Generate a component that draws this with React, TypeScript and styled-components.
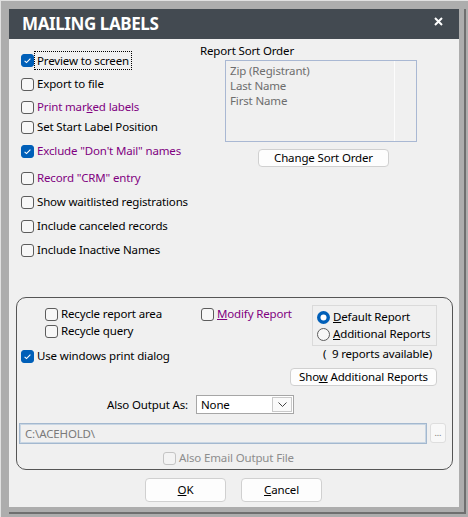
import React from "react";
import styled, { createGlobalStyle } from "styled-components";

const GlobalStyle = createGlobalStyle`
  html, body { margin: 0; padding: 0; background: #adadad; }
  body {
    font-family: "Noto Sans", "Open Sans", sans-serif;
    font-size: 11.5px;
    letter-spacing: -0.15px;
    color: #000;
  }
  * { box-sizing: border-box; }
`;

const Frame = styled.div`
  width: 468px;
  height: 517px;
  display: flex;
  background: #adadad;
  border-top: 1px solid #e1e1e1;
  border-left: 1px solid #e1e1e1;
  padding: 8px 2px 3px 8px;
`;

const Bevel = styled.div`
  flex: 1;
  display: flex;
  border-right: 2px solid #6f6f6f;
  border-bottom: 2px solid #6f6f6f;
  padding: 0 5px 5px 0;
`;

const Window = styled.div`
  flex: 1;
  display: flex;
  flex-direction: column;
  background: #f0f0f0;
`;

const TitleBar = styled.div`
  height: 30px;
  flex: none;
  display: flex;
  align-items: center;
  justify-content: space-between;
  background: #434a51;
  padding: 0 16px 0 13px;
`;

const Title = styled.div`
  color: #fff;
  font-weight: 700;
  font-size: 17px;
  letter-spacing: -0.4px;
  line-height: 30px;
`;

const CloseIcon = styled.svg`
  width: 9px;
  height: 9px;
  margin-top: -5px;
`;

const Body = styled.div`
  flex: 1;
  display: flex;
  flex-direction: column;
`;

const TopSection = styled.div`
  height: 258px;
  flex: none;
  display: flex;
`;

const OptionColumn = styled.div`
  width: 191px;
  padding: 12px 0 0 12px;
  display: flex;
  flex-direction: column;
`;

const Row = styled.div<{ $gap?: number; $indent?: number; $h?: number }>`
  display: flex;
  align-items: center;
  gap: 3px;
  height: ${(p) => p.$h ?? 18}px;
  margin-top: ${(p) => p.$gap ?? 0}px;
  margin-left: ${(p) => p.$indent ?? 0}px;
  white-space: nowrap;
`;

const Label = styled.span<{ $tone?: "normal" | "purple" | "disabled" }>`
  color: ${(p) =>
    p.$tone === "purple" ? "#800080" : p.$tone === "disabled" ? "#8d8d8d" : "#000"};
  line-height: 16px;
`;

const Focused = styled.span`
  outline: 1px dotted #000;
  outline-offset: 0;
  padding: 1px 2px 0 2px;
  margin-left: -2px;
  line-height: 16px;
`;

const Box = styled.span<{ $checked?: boolean; $disabled?: boolean }>`
  width: 13px;
  height: 13px;
  flex: none;
  border-radius: 3px;
  display: inline-flex;
  align-items: center;
  justify-content: center;
  background: ${(p) => (p.$checked ? "#005fb8" : p.$disabled ? "#f3f3f3" : "#f7f7f7")};
  border: 1px solid
    ${(p) => (p.$checked ? "#005fb8" : p.$disabled ? "#c4c4c4" : "#5c5c5c")};
`;

const CheckBox: React.FC<{ checked?: boolean; disabled?: boolean }> = ({
  checked,
  disabled,
}) => (
  <Box $checked={checked} $disabled={disabled}>
    {checked && (
      <svg width="11" height="11" viewBox="0 0 11 11">
        <path d="M2.6 5.8 L4.5 7.6 L8.4 3.6" fill="none" stroke="#fff" strokeWidth="1.1" />
      </svg>
    )}
  </Box>
);

const Radio: React.FC<{ selected?: boolean }> = ({ selected }) => (
  <svg width="13" height="13" viewBox="0 0 13 13" style={{ flex: "none" }}>
    {selected ? (
      <>
        <circle cx="6.5" cy="6.5" r="6.5" fill="#005fb8" />
        <circle cx="6.5" cy="6.5" r="3" fill="#fff" />
      </>
    ) : (
      <circle cx="6.5" cy="6.5" r="6" fill="#f7f7f7" stroke="#5c5c5c" strokeWidth="1" />
    )}
  </svg>
);

const SortColumn = styled.div`
  flex: 1;
  display: flex;
  flex-direction: column;
  padding-top: 4px;
`;

const SortCaption = styled.div`
  line-height: 16px;
  height: 17px;
`;

const SortList = styled.div`
  margin-left: 25px;
  width: 192px;
  height: 82px;
  border: 1px solid #a9b8d3;
  display: flex;
`;

const SortItems = styled.div`
  flex: 1;
  padding: 2px 0 0 4px;
  color: #6d6d6d;
`;

const SortItem = styled.div`
  height: 15px;
  line-height: 15px;
`;

const SortScroll = styled.div`
  width: 22px;
  border-left: 1px solid #fcfcfc;
`;

const Button = styled.button<{ $w: number; $h: number }>`
  width: ${(p) => p.$w}px;
  height: ${(p) => p.$h}px;
  padding: 0;
  font: inherit;
  letter-spacing: inherit;
  color: #000;
  background: #fdfdfd;
  border: 1px solid #d0d0d0;
  border-radius: 4px;
  line-height: 14px;
`;

const SortButtonWrap = styled.div`
  margin: 7px 0 0 58px;
`;

const GroupBox = styled.div`
  margin-left: 7px;
  width: 437px;
  height: 173px;
  flex: none;
  border: 1px solid #555;
  border-radius: 10px;
  display: flex;
  flex-direction: column;
`;

const GroupTop = styled.div`
  display: flex;
`;

const GroupLeft = styled.div`
  width: 273px;
  padding-top: 8px;
  display: flex;
  flex-direction: column;
`;

const RecycleGrid = styled.div`
  display: grid;
  grid-template-columns: 156px auto;
  row-gap: 1px;
  margin-left: 28px;
`;

const GroupRight = styled.div`
  width: 147px;
  display: flex;
  flex-direction: column;
  align-items: flex-end;
`;

const RadioBox = styled.div`
  margin-top: 7px;
  width: 125px;
  height: 41px;
  border: 1px solid #dadada;
  padding: 3px 0 0 4px;
  display: flex;
  flex-direction: column;
  gap: 1px;
`;

const Note = styled.div`
  line-height: 16px;
  margin-right: 5px;
`;

const ButtonGap = styled.div`
  margin-top: 6px;
`;

const OutputRow = styled.div`
  display: flex;
  align-items: center;
  margin-top: 9px;
  height: 19px;
`;

const OutputLabel = styled.div`
  width: 171px;
  text-align: right;
  margin-right: 8px;
`;

const Select = styled.div`
  width: 98px;
  height: 19px;
  background: #fff;
  border: 1px solid #a6a6a6;
  display: flex;
  align-items: center;
  justify-content: space-between;
  padding: 0 1px 0 4px;
`;

const SelectArrow = styled.div`
  width: 20px;
  height: 15px;
  border: 1px solid #c9c9c9;
  background: #fafafa;
  display: flex;
  align-items: center;
  justify-content: center;
`;

const PathRow = styled.div`
  display: flex;
  align-items: flex-start;
  gap: 3px;
  margin: 9px 0 0 2px;
`;

const PathInput = styled.div`
  width: 408px;
  height: 21px;
  border: 1px solid #a3b8cf;
  box-shadow: inset 0 0 0 1px #c9d6e3;
  background: #f0f0f0;
  color: #7a7a7a;
  padding-left: 5px;
  line-height: 19px;
`;

const BrowseButton = styled.div`
  width: 16px;
  height: 20px;
  background: #f8f8f8;
  border: 1px solid #dedede;
  border-radius: 3px;
  color: #777;
  font-size: 9px;
  text-align: center;
  line-height: 18px;
`;

const Footer = styled.div`
  display: flex;
  justify-content: center;
  gap: 15px;
  margin-top: 8px;
  padding-right: 1px;
`;

export default function App() {
  return (
    <>
      <GlobalStyle />
      <Frame>
        <Bevel>
          <Window>
            <TitleBar>
              <Title>MAILING LABELS</Title>
              <CloseIcon viewBox="0 0 9 9">
                <path d="M1 1 L8 8 M8 1 L1 8" stroke="#fff" strokeWidth="2" />
              </CloseIcon>
            </TitleBar>
            <Body>
              <TopSection>
                <OptionColumn>
                  <Row>
                    <CheckBox checked />
                    <Focused>Preview to screen</Focused>
                  </Row>
                  <Row $gap={6}>
                    <CheckBox />
                    <Label>Export to file</Label>
                  </Row>
                  <Row $gap={5}>
                    <CheckBox />
                    <Label $tone="purple">
                      Print mar<u>k</u>ed labels
                    </Label>
                  </Row>
                  <Row $gap={2}>
                    <CheckBox />
                    <Label>Set Start Label Position</Label>
                  </Row>
                  <Row $gap={6}>
                    <CheckBox checked />
                    <Label $tone="purple">Exclude "Don't Mail" names</Label>
                  </Row>
                  <Row $gap={9}>
                    <CheckBox />
                    <Label $tone="purple">Record "CRM" entry</Label>
                  </Row>
                  <Row $gap={6}>
                    <CheckBox />
                    <Label>Show waitlisted registrations</Label>
                  </Row>
                  <Row $gap={6}>
                    <CheckBox />
                    <Label>Include canceled records</Label>
                  </Row>
                  <Row $gap={6}>
                    <CheckBox />
                    <Label>Include Inactive Names</Label>
                  </Row>
                </OptionColumn>
                <SortColumn>
                  <SortCaption>Report Sort Order</SortCaption>
                  <SortList>
                    <SortItems>
                      <SortItem>Zip (Registrant)</SortItem>
                      <SortItem>Last Name</SortItem>
                      <SortItem>First Name</SortItem>
                    </SortItems>
                    <SortScroll />
                  </SortList>
                  <SortButtonWrap>
                    <Button $w={131} $h={18}>Change Sort Order</Button>
                  </SortButtonWrap>
                </SortColumn>
              </TopSection>

              <GroupBox>
                <GroupTop>
                  <GroupLeft>
                    <RecycleGrid>
                      <Row $h={16}>
                        <CheckBox />
                        <Label>Recycle report area</Label>
                      </Row>
                      <Row $h={16}>
                        <CheckBox />
                        <Label $tone="purple">
                          <u>M</u>odify Report
                        </Label>
                      </Row>
                      <Row $h={16}>
                        <CheckBox />
                        <Label>Recycle query</Label>
                      </Row>
                    </RecycleGrid>
                    <Row $h={16} $gap={9} $indent={4}>
                      <CheckBox checked />
                      <Label>Use windows print dialog</Label>
                    </Row>
                  </GroupLeft>
                  <GroupRight>
                    <RadioBox>
                      <Row $h={16}>
                        <Radio selected />
                        <Label>
                          <u>D</u>efault Report
                        </Label>
                      </Row>
                      <Row $h={16}>
                        <Radio />
                        <Label>
                          <u>A</u>dditional Reports
                        </Label>
                      </Row>
                    </RadioBox>
                    <Note>(&nbsp; 9 reports available)</Note>
                    <ButtonGap>
                      <Button $w={147} $h={18}>
                        Sho<u>w</u> Additional Reports
                      </Button>
                    </ButtonGap>
                  </GroupRight>
                </GroupTop>

                <OutputRow>
                  <OutputLabel>Also Output As:</OutputLabel>
                  <Select>
                    <span>None</span>
                    <SelectArrow>
                      <svg width="9" height="5" viewBox="0 0 9 5">
                        <path d="M0.5 0.5 L4.5 4.5 L8.5 0.5" fill="none" stroke="#444" strokeWidth="1" />
                      </svg>
                    </SelectArrow>
                  </Select>
                </OutputRow>

                <PathRow>
                  <PathInput>C:\ACEHOLD\</PathInput>
                  <BrowseButton>...</BrowseButton>
                </PathRow>

                <Row $h={16} $gap={6} $indent={146}>
                  <CheckBox disabled />
                  <Label $tone="disabled">Also Email Output File</Label>
                </Row>
              </GroupBox>

              <Footer>
                <Button $w={81} $h={24}>
                  <u>O</u>K
                </Button>
                <Button $w={81} $h={24}>
                  <u>C</u>ancel
                </Button>
              </Footer>
            </Body>
          </Window>
        </Bevel>
      </Frame>
    </>
  );
}
